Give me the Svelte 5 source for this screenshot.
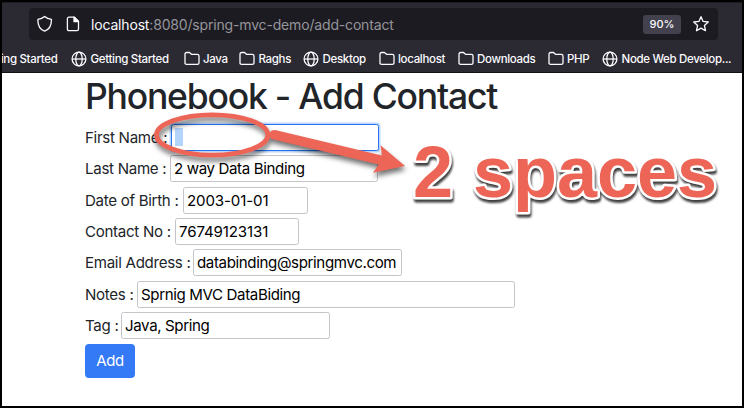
<script>
  const bookmarks = [
    { label: 'Getting Started', icon: 'globe', w: 112.5 },
    { label: 'Java', icon: 'folder', w: 55.5 },
    { label: 'Raghs', icon: 'folder', w: 64 },
    { label: 'Desktop', icon: 'globe', w: 75.5 },
    { label: 'localhost', icon: 'folder', w: 79 },
    { label: 'Downloads', icon: 'folder', w: 90 },
    { label: 'PHP', icon: 'folder', w: 54.5 },
    { label: 'Node Web Develop...', icon: 'globe', w: 130 }
  ];
  const fields = [
    { label: 'First Name :', value: '', at: 86, w: 208, focus: true },
    { label: 'Last Name :', value: '2 way Data Binding', at: 85, w: 208 },
    { label: 'Date of Birth :', value: '2003-01-01', at: 98, w: 125, numeric: true },
    { label: 'Contact No :', value: '76749123131', at: 90, w: 124, numeric: true },
    { label: 'Email Address :', value: 'databinding@springmvc.com', at: 108, w: 209 },
    { label: 'Notes :', value: 'Sprnig MVC DataBiding', at: 52, w: 378 },
    { label: 'Tag :', value: 'Java, Spring', at: 36, w: 209 }
  ];
</script>

<div class="window">
  <header>
    <div class="address">
      <svg class="shield" width="16" height="18" viewBox="0 0 16 18"><path d="M7.6 1.4C9.3 2.9 11.6 4 14.4 4.3C14.6 9.5 12.7 14.2 7.6 16.2C2.5 14.2.7 9.5.9 4.3C3.6 4 5.9 2.9 7.6 1.4Z" /></svg>
      <svg class="page-icon" width="14" height="16" viewBox="0 0 14 16"><path d="M3 1.2H8.5L12.5 5.2V13Q12.5 14.6 11 14.6H3Q1.4 14.6 1.4 13V2.8Q1.4 1.2 3 1.2Z" /><path d="M8 1.2V5.7H12.5Z" fill="#fbfbfe" /></svg>
      <span class="url"><b>localhost</b>:8080/spring-mvc-demo/add-contact</span>
      <span class="zoom">90%</span>
      <svg class="star" width="18" height="18" viewBox="0 0 18 18"><path d="M9 1.7 11.1 6.4 16.3 7 12.4 10.5 13.5 15.7 9 13.1 4.5 15.7 5.6 10.5 1.7 7 6.9 6.4Z" /></svg>
    </div>
    <nav>
      <span class="cut">ing Started</span>
      {#each bookmarks as b}
        <span class="bookmark" style="width:{b.w}px">
          {#if b.icon === 'globe'}
            <svg width="16" height="16" viewBox="0 0 16 16"><circle cx="8" cy="8" r="6.9" /><ellipse cx="8" cy="8" rx="3.2" ry="6.9" /><path d="M1 8H15" /></svg>
          {:else}
            <svg width="16" height="16" viewBox="0 0 16 16"><path d="M1 12V3.2Q1 1.5 2.7 1.5H5.5L7.5 3.3H13.3Q15 3.3 15 5V12Q15 13.4 13.3 13.4H2.7Q1 13.4 1 12Z" /></svg>
          {/if}
          <span>{b.label}</span>
        </span>
      {/each}
    </nav>
  </header>
  <main>
    <h1>Phonebook - Add Contact</h1>
    <form>
      {#each fields as f}
        <div class="row">
          <span class="label" style="width:{f.at}px">{f.label}</span>
          <span class="input" class:focus={f.focus} class:numeric={f.numeric} style="width:{f.w}px">
            {#if f.focus}<i></i>{:else}{f.value}{/if}
          </span>
        </div>
      {/each}
      <button type="button">Add</button>
    </form>
  </main>
  <svg class="notes" width="744" height="408" viewBox="0 0 744 408">
    <g class="shadow">
      <ellipse cx="212.2" cy="135" rx="55.7" ry="20.1" fill="none" stroke="#ec6556" stroke-width="4.8" />
      <path d="M275 130Q270 130 269.4 134.3Q269.4 138 272.5 139.2L378.7 164.6L373 172.8L405 166L380.5 145.2L382 155.6Z" fill="#ec6556" />
    </g>
    <text class="callout" x="413" y="197" textLength="304">2 spaces</text>
  </svg>
</div>

<style>
  :global(body) { margin: 0; }
  .window { position: relative; box-sizing: border-box; width: 744px; height: 408px; overflow: hidden; border: 2px solid #000; background: #fff; font-family: Inter, "Liberation Sans", sans-serif; }
  header { box-sizing: border-box; height: 71px; padding: 6px 0 0 27px; background: #2b2a33; border-top: 1px solid #1c1b22; border-bottom: 1px solid #111016; }
  .address { display: flex; align-items: center; width: 689px; height: 32px; border-radius: 4px; background: #1c1b22; padding-left: 8px; box-sizing: border-box; margin-top: -1px; }
  svg { fill: none; stroke: #fbfbfe; stroke-width: 1.3; stroke-linejoin: round; flex: none; }
  .page-icon { margin-left: 13px; }
  .url { margin-left: 11px; width: 552px; color: #96959b; font-size: 14px; letter-spacing: -.17px; white-space: nowrap; }
  .url b { color: #fbfbfe; font-weight: 400; }
  .zoom { display: flex; align-items: center; justify-content: center; width: 38px; height: 19px; border-radius: 3px; background: #42414d; color: #fbfbfe; font-size: 11px; font-weight: 500; }
  .star { margin-left: 11px; }
  nav { display: flex; align-items: center; height: 37px; margin-left: -27px; font-size: 11.5px; letter-spacing: -.32px; font-weight: 500; color: #fbfbfe; white-space: nowrap; }
  .cut { display: flex; justify-content: flex-end; box-sizing: border-box; width: 69px; padding-right: 13.5px; flex: none; }
  .bookmark { display: flex; align-items: center; gap: 3.5px; flex: none; }
  main { padding-left: 83px; color: #212529; }
  h1 { margin: 0; height: 48.6px; line-height: 48px; font-size: 35.5px; letter-spacing: -1.21px; font-weight: 500; white-space: nowrap; }
  .row { display: flex; align-items: center; height: 31.4px; font-size: 15.1px; letter-spacing: -.38px; white-space: nowrap; }
  .label { flex: none; letter-spacing: -.3px; }
  .input { display: flex; align-items: center; box-sizing: border-box; height: 27px; padding-left: 3px; border: 1px solid #c4c4ca; border-radius: 2.5px; background: #fff; color: #000; }
  .input.numeric { letter-spacing: -.14px; }
  .input.focus { border: 1px solid #2874f0; box-shadow: 0 0 0 1.5px #bcd8fb; }
  .input i { width: 8px; height: 18px; background: #b3d5fd; }
  button { display: block; margin: 2.5px 0 0; width: 50px; height: 34px; padding: 0; border: 0; border-radius: 4px; background: #347af6; color: #fff; font: 400 15px Inter, sans-serif; letter-spacing: -.4px; }
  .notes { position: absolute; left: -2px; top: -2px; stroke: none; }
  .shadow { filter: drop-shadow(1px 4px 2.5px rgba(0,0,0,.55)); }
  .callout { font: 700 72px "Liberation Sans", Arial, sans-serif; fill: #ec6556; stroke: #fff; stroke-width: 5px; paint-order: stroke; stroke-linejoin: round; filter: drop-shadow(1px 3px 1.2px rgba(0,0,0,.75)); }
</style>
